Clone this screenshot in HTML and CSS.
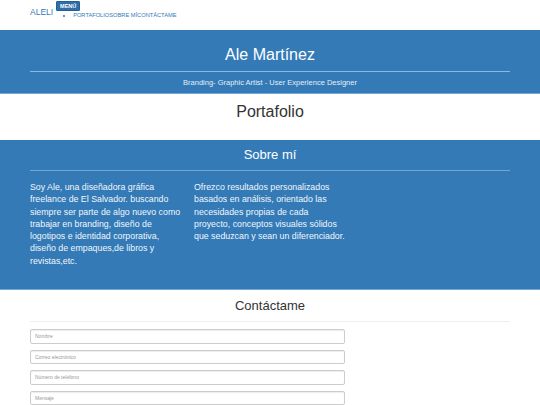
FILE: index.html
```html
<!DOCTYPE html>
<html lang="es">
<head>
<meta charset="utf-8">
<title>Ale Martínez</title>
<link rel="stylesheet" href="styles.css">
</head>
<body>
<nav class="navbar">
  <a class="brand" href="#">ALELI</a>
  <div class="menu">
    <button class="menu-btn">MENÚ</button>
    <ul class="menu-list">
      <li><a href="#">PORTAFOLIO</a><a href="#">SOBRE MÍ</a><a href="#">CONTÁCTAME</a></li>
    </ul>
  </div>
</nav>
<header class="hero">
  <h1 class="hero-title">Ale Martínez</h1>
  <hr class="hero-rule">
  <p class="hero-sub">Branding- Graphic Artist - User Experience Designer</p>
</header>
<section class="portfolio">
  <h2 class="portfolio-title">Portafolio</h2>
</section>
<section class="about">
  <h2 class="about-title">Sobre mí</h2>
  <hr class="about-rule">
  <div class="about-cols">
    <p>Soy Ale, una diseñadora gráfica freelance de El Salvador. buscando siempre ser parte de algo nuevo como trabajar en branding, diseño de logotipos e identidad corporativa, diseño de empaques,de libros y revistas,etc.</p>
    <p>Ofrezco resultados personalizados basados en análisis, orientado las necesidades propias de cada<br>proyecto, conceptos visuales sólidos que seduzcan y sean un diferenciador.</p>
  </div>
</section>
<section class="contact">
  <h2 class="contact-title">Contáctame</h2>
  <hr class="contact-rule">
  <form class="contact-form">
    <input class="field" type="text" placeholder="Nombre">
    <input class="field" type="text" placeholder="Correo electrónico">
    <input class="field" type="text" placeholder="Número de teléfono">
    <input class="field" type="text" placeholder="Mensaje">
  </form>
</section>
</body>
</html>
```
FILE: styles.css
```css
* { box-sizing: border-box; }
html, body { margin: 0; padding: 0; }
body {
  font-family: "Liberation Sans", Arial, sans-serif;
  color: #333;
  background: #fff;
}
.navbar {
  height: 30px;
  display: flex;
  align-items: flex-start;
  padding-left: 30px;
}
.brand {
  font-size: 8.5px;
  color: #337ab7;
  text-decoration: none;
  margin-top: 7px;
  margin-right: 3px;
}
.menu { display: flex; flex-direction: column; align-items: flex-start; }
.menu-btn {
  margin: 1px 0 0 0;
  padding: 1px 2px 1px 2px;
  font-family: "Liberation Sans", Arial, sans-serif;
  font-size: 5.5px;
  font-weight: bold;
  line-height: 6px;
  color: #fff;
  background: #2f6ea8;
  border: 1px solid #245e93;
  border-radius: 1px;
  height: 10px;
  width: 24px;
}
.menu-list {
  margin: 1px 0 0 0;
  padding-left: 17px;
  font-size: 5.7px;
  line-height: 6px;
  color: #337ab7;
  white-space: nowrap;
}
.menu-list li { list-style: disc; }
.menu-list a { color: #337ab7; text-decoration: none; }
.hero {
  background: #337ab7;
  height: 64px;
  border-bottom: 1px solid #74a7d6;
  padding: 15px 30px 0;
  color: #fff;
  text-align: center;
}
.hero-title {
  margin: 0;
  font-size: 16px;
  font-weight: normal;
  line-height: 20px;
}
.hero-rule {
  margin: 6px 0 0;
  border: 0;
  border-top: 1px solid #8ab8e4;
}
.hero-sub {
  margin: 6px 0 0;
  font-size: 7.5px;
  line-height: 9px;
  color: #e4eef8;
}
.portfolio {
  height: 46px;
  text-align: center;
  padding-top: 8px;
}
.portfolio-title {
  margin: 0;
  font-size: 16px;
  font-weight: normal;
  line-height: 20px;
  color: #333;
}
.about {
  background: #337ab7;
  height: 150px;
  border-bottom: 1px solid #74a7d6;
  padding: 7px 30px 0;
  color: #fff;
}
.about-title {
  margin: 0;
  text-align: center;
  font-size: 13px;
  font-weight: normal;
  line-height: 16px;
}
.about-rule {
  margin: 7px 0 0;
  border: 0;
  border-top: 1px solid #74a7d6;
}
.about-cols {
  display: grid;
  grid-template-columns: 156px 156px;
  column-gap: 8px;
  margin-top: 10px;
}
.about-cols p {
  margin: 0;
  font-size: 8.8px;
  line-height: 12.3px;
  color: #f2f6fb;
}
.contact {
  padding: 8px 30px 0;
}
.contact-title {
  margin: 0;
  text-align: center;
  font-size: 13px;
  font-weight: normal;
  line-height: 16px;
  color: #333;
}
.contact-rule {
  margin: 7px 0 0;
  border: 0;
  border-top: 1px solid #eee;
}
.contact-form {
  display: flex;
  flex-direction: column;
  gap: 6px;
  margin-top: 7px;
  width: 315px;
}
.field {
  height: 14.5px;
  padding: 0 4px;
  border: 1px solid #ccc;
  border-radius: 2px;
  font-family: "Liberation Sans", Arial, sans-serif;
  font-size: 5px;
  color: #555;
  box-shadow: inset 0 1px 1px rgba(0,0,0,0.075);
}
.field::placeholder { color: #999; }
```
